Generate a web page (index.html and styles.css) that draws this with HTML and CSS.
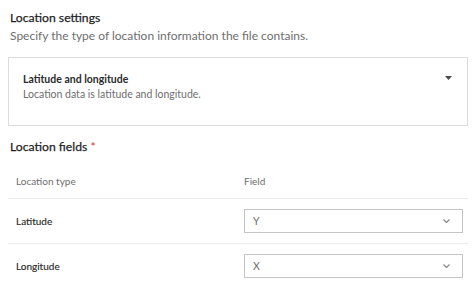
FILE: index.html
```html
<!DOCTYPE html>
<html lang="en">
<head>
    <meta charset="UTF-8">
    <meta name="viewport" content="width=device-width, initial-scale=1.0">
    <title>Location settings</title>
    <link rel="stylesheet" href="styles.css">
</head>
<body>
    <div class="panel">
        <!-- Location settings -->
        <h2 class="section-title">Location settings</h2>
        <p class="section-desc">Specify the type of location information the file contains.</p>

        <div class="type-picker">
            <div class="type-text">
                <div class="type-name">Latitude and longitude</div>
                <div class="type-desc">Location data is latitude and longitude.</div>
            </div>
            <svg class="caret" width="7" height="4" viewBox="0 0 7 4"><path d="M0 0h7L3.5 4z" fill="#4a4a4a"/></svg>
        </div>

        <!-- Location fields -->
        <h2 class="section-title fields-title">Location fields <span class="required">*</span></h2>

        <div class="fields-table">
            <div class="row head">
                <div class="cell">Location type</div>
                <div class="cell">Field</div>
            </div>
            <div class="row">
                <div class="cell label">Latitude</div>
                <div class="cell">
                    <div class="select">
                        <span>Y</span>
                        <svg width="7" height="4" viewBox="0 0 7 4"><path d="M0.5 0.5l3 3 3-3" fill="none" stroke="#8a8a8a" stroke-width="1.2"/></svg>
                    </div>
                </div>
            </div>
            <div class="row">
                <div class="cell label">Longitude</div>
                <div class="cell">
                    <div class="select">
                        <span>X</span>
                        <svg width="7" height="4" viewBox="0 0 7 4"><path d="M0.5 0.5l3 3 3-3" fill="none" stroke="#8a8a8a" stroke-width="1.2"/></svg>
                    </div>
                </div>
            </div>
        </div>
    </div>
</body>
</html>
```
FILE: styles.css
```css
body {
    margin: 0;
    background: #fff;
    font-family: 'Lato', 'Open Sans', sans-serif;
    color: #323232;
}

.panel {
    padding: 9px 6px 0 8px;
}

.section-title {
    margin: 0 0 0 2px;
    font-size: 12.2px;
    font-weight: 400;
    -webkit-text-stroke: 0.25px #1f1f1f; /* medium weight look */
    line-height: 18px;
    color: #1f1f1f;
}

.section-desc {
    margin: 0 0 0 2px;
    font-size: 12px;
    line-height: 18px;
    color: #6e6e6e;
}

/* Location type dropdown */
.type-picker {
    display: flex;
    justify-content: space-between;
    align-items: flex-start;
    margin-top: 12px;
    height: 69px;
    box-sizing: border-box;
    border: 1px solid #dcdcdc;
    padding: 14px 15px 0 14px;
}

.type-name {
    font-size: 10.5px;
    font-weight: 700;
    line-height: 15px;
    color: #2b2b2b;
}

.type-desc {
    font-size: 10.5px;
    line-height: 15px;
    color: #6e6e6e;
}

.caret {
    margin-top: 4px;
}

.fields-title {
    margin-top: 12px;
}

.required {
    color: #d83020;
    -webkit-text-stroke: 0;
}

/* Fields table */
.fields-table {
    margin-top: 7px;
}

.row {
    display: flex;
    align-items: center;
    height: 45px;
    border-top: 1px solid #ececec;
    box-sizing: border-box;
}

.row.head {
    height: 35px;
    border-top: none;
}

.cell {
    flex: 0 0 236px;
    box-sizing: border-box;
    padding-left: 8px;
    font-size: 10px;
    color: #6e6e6e;
}

.cell + .cell {
    flex: 1;
    padding: 0 5px 0 0;
}

.cell.label {
    color: #2b2b2b;
    -webkit-text-stroke: 0.15px #2b2b2b;
}

.select {
    display: flex;
    justify-content: space-between;
    align-items: center;
    height: 24px;
    box-sizing: border-box;
    border: 1px solid #c4c4c4;
    padding: 0 12px 0 8px;
    font-size: 10.5px;
    color: #6e6e6e;
}
```
